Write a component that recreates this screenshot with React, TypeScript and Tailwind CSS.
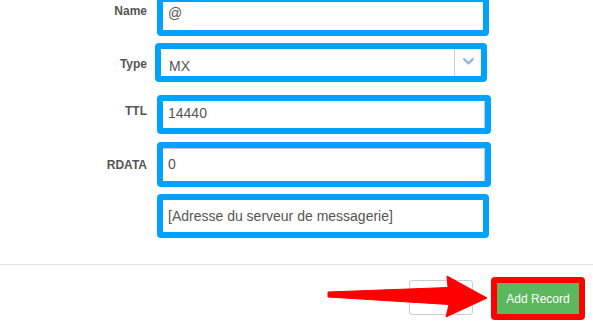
import React from "react";

const font = { fontFamily: '"Liberation Sans", Arial, sans-serif' };

function Label({ text, pt }: { text: string; pt: string }) {
  return (
    <div className={`w-[147px] shrink-0 text-right text-[12px] leading-[16px] font-bold text-[#555] ${pt}`}>
      {text}
    </div>
  );
}

export default function App() {
  return (
    <div className="relative w-[593px] h-[329px] overflow-hidden bg-white" style={font}>
      <div className="flex flex-col">
        {/* Name */}
        <div className="flex items-start -mt-[4px]">
          <Label text="Name" pt="pt-[7px]" />
          <div className="ml-[10px] w-[332px] h-[40px] rounded-[4px] border-[6px] border-[#00a2ff] bg-white pl-[5px] pt-[1px] text-[14px] leading-[20px] text-[#555]">
            @
          </div>
        </div>
        {/* Type */}
        <div className="flex items-start mt-[7px]">
          <Label text="Type" pt="pt-[13px]" />
          <div className="ml-[8px] w-[332px] h-[39px] rounded-[4px] border-[6px] border-[#00a2ff] bg-white flex">
            <div className="flex-1 pl-[8px] pt-[7px] text-[14px] leading-[20px] text-[#555]">MX</div>
            <div className="w-[1px] bg-[#cfcfcf]" />
            <div className="w-[26px] flex items-center justify-center pb-[2px]">
              <svg width="11" height="7" viewBox="0 0 11 7">
                <path d="M1.2 1.2 L5.5 5.3 L9.8 1.2" fill="none" stroke="#8fb8dc" strokeWidth="2.4" strokeLinecap="round" strokeLinejoin="round" />
              </svg>
            </div>
          </div>
        </div>
        {/* TTL */}
        <div className="flex items-start mt-[13px]">
          <Label text="TTL" pt="pt-[8px]" />
          <div className="ml-[10px] w-[334px] h-[39px] rounded-[4px] border-[6px] border-[#00a2ff] bg-white flex">
            <div className="flex-1 pl-[5px] pt-[2px] text-[14px] leading-[20px] text-[#555] border-r border-[#c8c8c8]">14440</div>
          </div>
        </div>
        {/* RDATA */}
        <div className="flex items-start mt-[8px]">
          <Label text="RDATA" pt="pt-[15px]" />
          <div className="ml-[10px] w-[334px] h-[45px] rounded-[4px] border-[6px] border-[#00a2ff] bg-white flex">
            <div className="flex-1 pl-[5px] pt-[5px] text-[14px] leading-[20px] text-[#555] border-r border-t border-[#c8c8c8]">0</div>
          </div>
        </div>
        {/* Extra */}
        <div className="flex items-start mt-[7px]">
          <div className="w-[147px] shrink-0" />
          <div className="ml-[10px] w-[332px] h-[44px] rounded-[4px] border-[6px] border-[#00a2ff] bg-white pl-[5px] pt-[6px] text-[14px] leading-[20px] text-[#555]">
            [Adresse du serveur de messagerie]
          </div>
        </div>

        <div className="mt-[26px] h-[1px] bg-[#e5e5e5]" />

        {/* Footer */}
        <div className="flex justify-end items-start pr-[8px] mt-[12px]">
          <div className="mt-[3px] w-[64px] h-[35px] rounded-[3px] border border-[#cccccc] bg-white" />
          <div className="ml-[18px] w-[94px] h-[43px] rounded-[4px] border-[6px] border-[#ff0000] bg-[#5cb85c] flex items-center justify-center text-[12px] text-white">
            Add Record
          </div>
        </div>
      </div>

      <svg className="absolute left-0 top-0 pointer-events-none" width="593" height="329" viewBox="0 0 593 329">
        <polygon
          points="328,292 448,287.5 447,276 487,298 446,317 449,304.5 328,297"
          fill="#ff0000"
          stroke="#ff0000"
          strokeWidth="1"
          strokeLinejoin="round"
        />
      </svg>
    </div>
  );
}
